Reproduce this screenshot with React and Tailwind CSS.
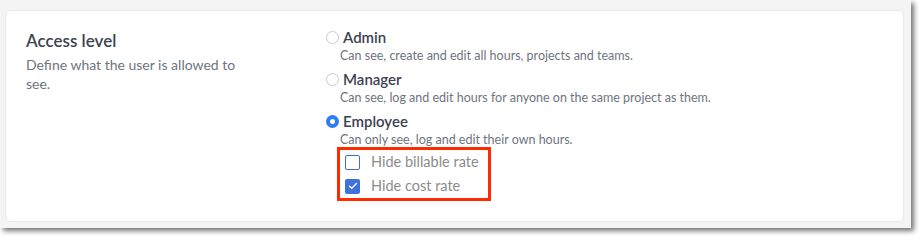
import React from "react";

const font = { fontFamily: "Lato, 'Open Sans', sans-serif" };

function Radio({ checked }) {
  if (checked) {
    return (
      <span className="w-[13px] h-[13px] rounded-full bg-[#2f7cf6] flex items-center justify-center shrink-0">
        <span className="w-[5px] h-[5px] rounded-full bg-white" />
      </span>
    );
  }
  return <span className="w-[13px] h-[13px] rounded-full border border-[#c9c9c9] bg-white shrink-0" />;
}

function Option({ label, desc, checked }) {
  return (
    <div className="flex flex-col">
      <div className="flex items-center gap-[4px] h-[20px]">
        <Radio checked={checked} />
        <span className="text-[15px] font-semibold text-[#3b4250] leading-[20px]">{label}</span>
      </div>
      <div className="pl-[14px] text-[12.5px] text-[#6e7480] leading-[18px]">{desc}</div>
    </div>
  );
}

export default function App() {
  return (
    <div className="w-[919px] h-[236px] bg-white" style={font}>
      <div className="w-[911px] h-[228px] bg-[#f4f4f4] pt-[10px] pl-[5px] pr-[7px] shadow-[3px_3px_5px_rgba(0,0,0,0.55)]">
        <div className="h-[212px] bg-white rounded-[6px] border border-[#e9e9e9] flex pt-[19px] pl-[20px]">
          <div className="w-[300px] shrink-0">
            <div className="text-[17px] font-semibold text-[#3b4250] leading-[22px]">Access level</div>
            <div className="mt-[3px] w-[230px] text-[14px] text-[#6e7480] leading-[19px]">
              Define what the user is allowed to see.
            </div>
          </div>
          <div className="flex flex-col gap-[4px] -mt-[3px]">
            <Option label="Admin" desc="Can see, create and edit all hours, projects and teams." />
            <Option label="Manager" desc="Can see, log and edit hours for anyone on the same project as them." />
            <Option label="Employee" desc="Can only see, log and edit their own hours." checked />
            <div className="ml-[11px] -mt-[6px] w-[154px] border-[3px] border-[#ff2a00] flex flex-col gap-[8px] py-[4px] pl-[5px]">
              <div className="flex items-center gap-[11px] h-[16px]">
                <span className="w-[15px] h-[15px] rounded-[2px] border border-[#3a6fd8] bg-white" />
                <span className="text-[14.5px] text-[#8c8c8c]">Hide billable rate</span>
              </div>
              <div className="flex items-center gap-[11px] h-[16px]">
                <span className="w-[15px] h-[15px] rounded-[2px] bg-[#3d72dc] flex items-center justify-center">
                  <svg width="10" height="8" viewBox="0 0 10 8" fill="none">
                    <path d="M1.5 4.2 L3.8 6.3 L8.5 1.6" stroke="white" strokeWidth="1.4" strokeLinecap="round" strokeLinejoin="round" />
                  </svg>
                </span>
                <span className="text-[14.5px] text-[#8c8c8c]">Hide cost rate</span>
              </div>
            </div>
          </div>
        </div>
      </div>
    </div>
  );
}
